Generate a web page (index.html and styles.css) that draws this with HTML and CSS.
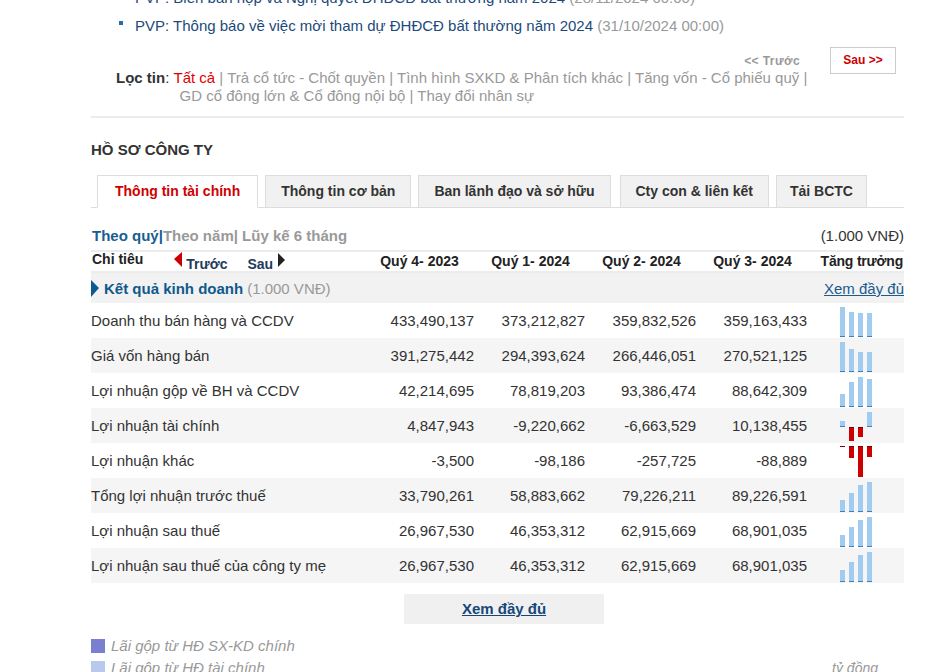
FILE: index.html
```html
<!DOCTYPE html>
<html lang="vi">

<head>
  <meta charset="UTF-8">
  <meta name="viewport" content="width=device-width, initial-scale=1.0">
  <title>Hồ sơ công ty - PVP</title>
  <link rel="stylesheet" href="styles.css">
</head>

<body>
  <div class="page">

    <!-- News list -->
    <ul class="news">
      <li><a href="#">PVP: Biên bản họp và Nghị quyết ĐHĐCĐ bất thường năm 2024</a> <span class="date">(28/11/2024 00:00)</span></li>
      <li><a href="#">PVP: Thông báo về việc mời tham dự ĐHĐCĐ bất thường năm 2024</a> <span class="date">(31/10/2024 00:00)</span></li>
    </ul>

    <!-- Pager -->
    <div class="pager">
      <span class="prev">&lt;&lt; Trước</span>
      <a href="#" class="next">Sau &gt;&gt;</a>
    </div>

    <!-- Filter -->
    <div class="filter">
      <span class="filter-label">Lọc tin</span>:&nbsp;
      <div class="filter-links">
        <a href="#" class="active">Tất cả</a> | <a href="#">Trả cổ tức - Chốt quyền</a> | <a href="#">Tình hình SXKD &amp; Phân tích khác</a> | <a href="#">Tăng vốn - Cổ phiếu quỹ</a> | <a href="#">GD cổ đông lớn &amp; Cổ đông nội bộ</a> | <a href="#">Thay đổi nhân sự</a>
      </div>
    </div>

    <!-- Company profile -->
    <h2 class="section-title">HỒ SƠ CÔNG TY</h2>

    <div class="tabs">
      <a href="#" class="tab active">Thông tin tài chính</a>
      <a href="#" class="tab">Thông tin cơ bản</a>
      <a href="#" class="tab">Ban lãnh đạo và sở hữu</a>
      <a href="#" class="tab">Cty con &amp; liên kết</a>
      <a href="#" class="tab">Tải BCTC</a>
    </div>

    <div class="period">
      <div class="period-links">
        <a href="#" class="on">Theo quý|</a><a href="#">Theo năm|</a> <a href="#">Lũy kế 6 tháng</a>
      </div>
      <span class="unit">(1.000 VNĐ)</span>
    </div>

    <!-- Financial table -->
    <div class="fin-table">
      <div class="row head">
        <div class="nav-cell">
          <span class="head-label">Chỉ tiêu</span>
          <span class="tri-left"></span>
          <a href="#" class="nav-link">Trước</a>
          <a href="#" class="nav-link sau">Sau</a>
          <span class="tri-right"></span>
        </div>
        <div class="q">Quý 4- 2023</div>
        <div class="q">Quý 1- 2024</div>
        <div class="q">Quý 2- 2024</div>
        <div class="q">Quý 3- 2024</div>
        <div class="growth">Tăng trưởng</div>
      </div>

      <div class="group">
        <div class="group-name"><span class="tri-blue"></span><b>Kết quả kinh doanh</b> <span class="muted">(1.000 VNĐ)</span></div>
        <a href="#" class="more">Xem đầy đủ</a>
      </div>

      <div class="row">
        <div class="label">Doanh thu bán hàng và CCDV</div>
        <div class="num">433,490,137</div>
        <div class="num">373,212,827</div>
        <div class="num">359,832,526</div>
        <div class="num">359,163,433</div>
        <div class="spark">
          <i class="bar" style="margin-top:0;height:30px"></i>
          <i class="bar" style="margin-top:5px;height:25px"></i>
          <i class="bar" style="margin-top:6px;height:24px"></i>
          <i class="bar" style="margin-top:6px;height:24px"></i>
        </div>
      </div>

      <div class="row alt">
        <div class="label">Giá vốn hàng bán</div>
        <div class="num">391,275,442</div>
        <div class="num">294,393,624</div>
        <div class="num">266,446,051</div>
        <div class="num">270,521,125</div>
        <div class="spark">
          <i class="bar" style="margin-top:0;height:30px"></i>
          <i class="bar" style="margin-top:7px;height:23px"></i>
          <i class="bar" style="margin-top:10px;height:20px"></i>
          <i class="bar" style="margin-top:10px;height:20px"></i>
        </div>
      </div>

      <div class="row">
        <div class="label">Lợi nhuận gộp về BH và CCDV</div>
        <div class="num">42,214,695</div>
        <div class="num">78,819,203</div>
        <div class="num">93,386,474</div>
        <div class="num">88,642,309</div>
        <div class="spark">
          <i class="bar" style="margin-top:17px;height:13px"></i>
          <i class="bar" style="margin-top:5px;height:25px"></i>
          <i class="bar" style="margin-top:0;height:30px"></i>
          <i class="bar" style="margin-top:2px;height:28px"></i>
        </div>
      </div>

      <div class="row alt">
        <div class="label">Lợi nhuận tài chính</div>
        <div class="num">4,847,943</div>
        <div class="num">-9,220,662</div>
        <div class="num">-6,663,529</div>
        <div class="num">10,138,455</div>
        <div class="spark">
          <i class="bar" style="margin-top:9px;height:6px"></i>
          <i class="bar neg" style="margin-top:15px;height:14px"></i>
          <i class="bar neg" style="margin-top:15px;height:10px"></i>
          <i class="bar" style="margin-top:0;height:15px"></i>
        </div>
      </div>

      <div class="row">
        <div class="label">Lợi nhuận khác</div>
        <div class="num">-3,500</div>
        <div class="num">-98,186</div>
        <div class="num">-257,725</div>
        <div class="num">-88,889</div>
        <div class="spark">
          <i class="bar neg" style="margin-top:-1px;height:1px"></i>
          <i class="bar neg" style="margin-top:-1px;height:12px"></i>
          <i class="bar neg" style="margin-top:-1px;height:31px"></i>
          <i class="bar neg" style="margin-top:-1px;height:11px"></i>
        </div>
      </div>

      <div class="row alt">
        <div class="label">Tổng lợi nhuận trước thuế</div>
        <div class="num">33,790,261</div>
        <div class="num">58,883,662</div>
        <div class="num">79,226,211</div>
        <div class="num">89,226,591</div>
        <div class="spark">
          <i class="bar" style="margin-top:18px;height:12px"></i>
          <i class="bar" style="margin-top:11px;height:19px"></i>
          <i class="bar" style="margin-top:3px;height:27px"></i>
          <i class="bar" style="margin-top:0;height:30px"></i>
        </div>
      </div>

      <div class="row">
        <div class="label">Lợi nhuận sau thuế</div>
        <div class="num">26,967,530</div>
        <div class="num">46,353,312</div>
        <div class="num">62,915,669</div>
        <div class="num">68,901,035</div>
        <div class="spark">
          <i class="bar" style="margin-top:18px;height:12px"></i>
          <i class="bar" style="margin-top:10px;height:20px"></i>
          <i class="bar" style="margin-top:3px;height:27px"></i>
          <i class="bar" style="margin-top:0;height:30px"></i>
        </div>
      </div>

      <div class="row alt">
        <div class="label">Lợi nhuận sau thuế của công ty mẹ</div>
        <div class="num">26,967,530</div>
        <div class="num">46,353,312</div>
        <div class="num">62,915,669</div>
        <div class="num">68,901,035</div>
        <div class="spark">
          <i class="bar" style="margin-top:18px;height:12px"></i>
          <i class="bar" style="margin-top:10px;height:20px"></i>
          <i class="bar" style="margin-top:3px;height:27px"></i>
          <i class="bar" style="margin-top:0;height:30px"></i>
        </div>
      </div>
    </div>

    <a href="#" class="full-btn">Xem đầy đủ</a>

    <!-- Chart legend -->
    <div class="legend">
      <div class="legend-items">
        <div class="legend-item"><span class="swatch sxkd"></span>Lãi gộp từ HĐ SX-KD chính</div>
        <div class="legend-item"><span class="swatch tc"></span>Lãi gộp từ HĐ tài chính</div>
      </div>
      <span class="axis-unit">tỷ đồng</span>
    </div>

  </div>
</body>

</html>
```

FILE: styles.css
```css
/* Base */
body {
  margin: 0;
  background: #fff;
  font-family: "Liberation Sans", Arial, sans-serif;
  font-size: 15px;
  color: #333;
}

a {
  text-decoration: none;
  color: inherit;
}

.page {
  width: 813px;
  margin-left: 91px;
}

/* News list */
.news {
  list-style: none;
  margin: -16px 0 0 28px;
  padding: 0;
}

.news li {
  line-height: 28px;
  white-space: nowrap;
}

.news li::before {
  content: "";
  display: inline-block;
  width: 4px;
  height: 4px;
  background: #2a6aa6;
  margin-right: 12px;
  vertical-align: 6px;
}

.news a {
  color: #1b4a7a;
}

.news .date {
  color: #999;
}

/* Pager */
.pager {
  display: flex;
  justify-content: flex-end;
  align-items: center;
  gap: 30px;
  margin-top: 7px;
  padding-right: 8px;
  height: 27px;
}

.pager .prev {
  font-size: 12px;
  font-weight: bold;
  color: #999;
  letter-spacing: 0.4px;
}

.pager .next {
  display: block;
  box-sizing: border-box;
  width: 66px;
  height: 27px;
  line-height: 25px;
  text-align: center;
  border: 1px solid #ccc;
  font-size: 12px;
  font-weight: bold;
  color: #c00;
}

/* Filter */
.filter {
  display: flex;
  width: 700px;
  margin: -5px 0 0 25px;
  line-height: 18px;
  color: #333;
}

.filter-label {
  font-weight: bold;
}

.filter-links {
  flex: 1;
  color: #999;
  padding-left: 6px;
  text-indent: -6px;
}

.filter-links .active {
  color: #e00000;
}

.filter + .section-title {
  border-top: 2px solid #ececec;
  margin-top: 11px;
  padding-top: 23px;
}

/* Section title */
.section-title {
  margin: 0;
  font-size: 15px;
  line-height: 18px;
  font-weight: bold;
  color: #333;
}

/* Tabs */
.tabs {
  display: flex;
  gap: 7px;
  margin-top: 16px;
  padding-left: 6px;
  border-bottom: 1px solid #ddd;
}

.tab {
  padding: 7px 15px 8px;
  margin-bottom: -1px;
  line-height: 16px;
  font-size: 14px;
  font-weight: bold;
  color: #333;
  background: #f1f1f1;
  border: 1px solid #ddd;
}

.tab:nth-child(4) {
  margin-left: 2px;
}

.tab:nth-child(5) {
  padding: 7px 13px 8px;
}

.tab.active {
  padding: 7px 17px 8px 17px;
  color: #d00000;
  background: #fff;
  border-bottom-color: #fff;
}

/* Period switch */
.period {
  display: flex;
  justify-content: space-between;
  margin-top: 18px;
  line-height: 20px;
}

.period-links {
  font-weight: bold;
  color: #999;
  padding-left: 1px;
}

.period-links .on {
  color: #17608f;
}

/* Financial table */
.fin-table {
  margin-top: 4px;
}

.row {
  display: grid;
  grid-template-columns: 273px repeat(4, 111px) 1fr;
  align-items: center;
  height: 35px;
}

.row.alt {
  background: #f5f5f5;
}

.row.head {
  height: 19px;
  align-items: start;
  border-top: 2px solid #ececec;
  border-bottom: 2px solid #ececec;
  font-size: 14px;
  font-weight: bold;
  color: #222;
}

.nav-cell {
  display: flex;
  align-items: flex-start;
  line-height: 14px;
}

.head-label {
  padding-left: 1px;
}

.tri-left {
  width: 0;
  height: 0;
  margin-left: 31px;
  border-top: 7px solid transparent;
  border-bottom: 8px solid transparent;
  border-right: 8px solid #c00;
}

.tri-right {
  width: 0;
  height: 0;
  margin: 1px 0 0 5px;
  border-top: 7px solid transparent;
  border-bottom: 7px solid transparent;
  border-left: 7px solid #222;
}

.nav-link {
  margin: 5px 0 0 4px;
  color: #1f3a5a;
}

.nav-link.sau {
  margin-left: 20px;
}

.head .q {
  text-align: center;
  line-height: 19px;
}

.head .growth {
  text-align: right;
  line-height: 19px;
  padding-right: 1px;
  letter-spacing: -0.2px;
}

/* Group row */
.group {
  display: flex;
  justify-content: space-between;
  align-items: center;
  height: 30px;
  background: #f2f2f2;
}

.group-name {
  display: flex;
  align-items: center;
  color: #0f5a8d;
}

.group-name .muted {
  margin-left: 4px;
  color: #999;
}

.tri-blue {
  width: 0;
  height: 0;
  margin-right: 5px;
  border-top: 8px solid transparent;
  border-bottom: 9px solid transparent;
  border-left: 8px solid #0f5a8d;
}

.more {
  color: #1d5a8e;
  text-decoration: underline;
}

/* Data rows */
.row .num {
  text-align: right;
  padding-right: 1px;
}

.spark {
  display: flex;
  align-items: flex-start;
  gap: 4px;
  align-self: end;
  height: 30px;
  margin-bottom: 1px;
  padding-left: 32px;
}

.bar {
  display: block;
  box-sizing: border-box;
  width: 5px;
  background: #a2cbf0;
  border-bottom: 1px solid #3f7fba;
}

.bar.neg {
  background: #cc0000;
  border-bottom: none;
  border-top: 1px solid #7a0000;
}

/* Full view button */
.full-btn {
  display: block;
  width: 200px;
  height: 30px;
  line-height: 30px;
  margin: 11px 0 0 313px;
  text-align: center;
  background: #f0f0f0;
  font-weight: bold;
  color: #16477a;
  text-decoration: underline;
}

/* Legend */
.legend {
  display: flex;
  justify-content: space-between;
  align-items: flex-end;
  margin-top: 11px;
}

.legend-item {
  display: flex;
  align-items: center;
  gap: 6px;
  line-height: 22px;
  font-style: italic;
  color: #999;
}

.swatch {
  width: 14px;
  height: 14px;
}

.swatch.sxkd {
  background: #7b7fcf;
}

.swatch.tc {
  background: #b9c9ee;
}

.axis-unit {
  margin-right: 26px;
  line-height: 22px;
  font-size: 14px;
  font-style: italic;
  color: #999;
}
```
